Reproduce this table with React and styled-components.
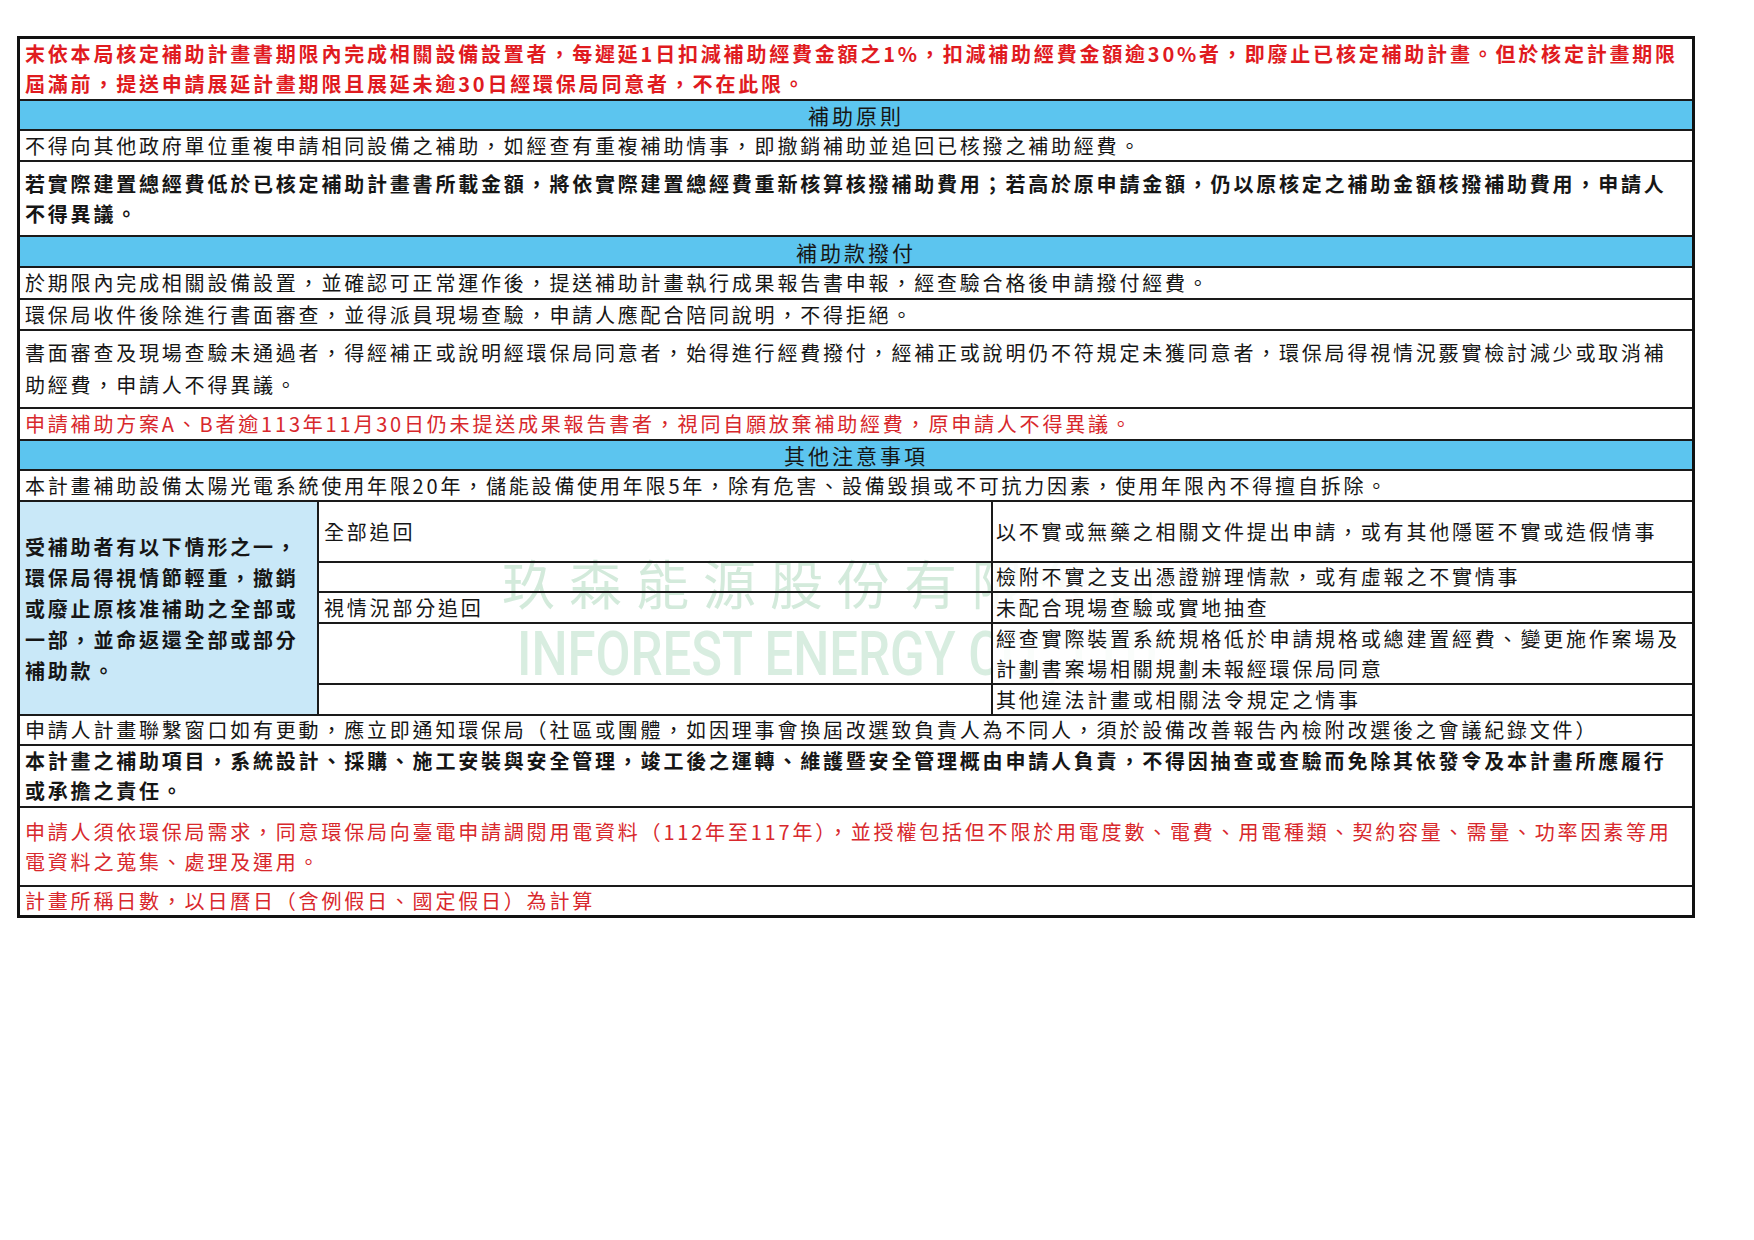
import React from "react";
import styled, { createGlobalStyle } from "styled-components";

const GlobalStyle = createGlobalStyle`
  html, body { margin: 0; padding: 0; background: #ffffff; }
  body { font-family: "Noto Sans CJK TC", "Noto Sans CJK SC", sans-serif; }
`;

const Page = styled.div`
  width: 1754px;
  min-height: 1240px;
  box-sizing: border-box;
  padding: 36px 0 0 17px;
  background: #ffffff;
`;

const Sheet = styled.div`
  width: 1678px;
  box-sizing: border-box;
  border: 3px solid #111;
  display: flex;
  flex-direction: column;
  font-family: "Noto Sans CJK TC", "Noto Sans CJK SC", sans-serif;
  font-size: 20px;
  letter-spacing: 2.8px;
  color: #161616;
`;

const toneColor = (t) =>
  t === "red" ? "#e01b1f" : t === "softred" ? "#d8282c" : "#161616";

const Row = styled.div`
  box-sizing: border-box;
  height: ${(p) => p.$h}px;
  flex: none;
  border-bottom: 2px solid #1a1a1a;
  &:last-child { border-bottom: none; }
  display: flex;
  align-items: center;
  justify-content: flex-start;
  padding-left: 5px;
  background: #ffffff;
  color: ${(p) => toneColor(p.$tone)};
  font-weight: ${(p) => (p.$bold ? 700 : 400)};
`;

const HeadRow = styled.div`
  box-sizing: border-box;
  height: ${(p) => p.$h}px;
  flex: none;
  border-bottom: 2px solid #1a1a1a;
  display: flex;
  align-items: center;
  justify-content: center;
  background: #5cc5ef;
  color: #161616;
  font-size: 21px;
  letter-spacing: 3px;
`;

const Lines = styled.div`
  line-height: ${(p) => p.$lh || 30}px;
  white-space: nowrap;
`;

const Matrix = styled.div`
  position: relative;
  box-sizing: border-box;
  height: 214px;
  flex: none;
  border-bottom: 2px solid #1a1a1a;
  display: grid;
  grid-template-columns: 299px 674px 1fr;
  grid-template-rows: 61px 30px 31px 61px 29px;
  overflow: hidden;
`;

const SideCell = styled.div`
  position: relative;
  z-index: 1;
  grid-column: 1;
  grid-row: 1 / span 5;
  box-sizing: border-box;
  border-right: 2px solid #1a1a1a;
  background: #c9e8f8;
  display: flex;
  align-items: center;
  padding-left: 5px;
  font-weight: 700;
`;

const MidCell = styled.div`
  position: relative;
  z-index: 1;
  grid-column: 2;
  grid-row: ${(p) => p.$row};
  box-sizing: border-box;
  border-right: 2px solid #1a1a1a;
  border-bottom: ${(p) => (p.$last ? "none" : "2px solid #1a1a1a")};
  background: transparent;
  display: flex;
  align-items: center;
  padding-left: 5px;
`;

const RightCell = styled.div`
  position: relative;
  z-index: 1;
  grid-column: 3;
  grid-row: ${(p) => p.$row};
  box-sizing: border-box;
  border-bottom: ${(p) => (p.$last ? "none" : "2px solid #1a1a1a")};
  background: rgba(255, 255, 255, 0.86);
  display: flex;
  align-items: center;
  padding-left: 3px;
`;

const MarkCn = styled.div`
  position: absolute;
  z-index: 0;
  left: 482px;
  top: 54px;
  font-size: 53px;
  line-height: 1;
  letter-spacing: 14px;
  white-space: nowrap;
  color: #d3eadb;
  pointer-events: none;
`;

const MarkEn = styled.div`
  position: absolute;
  z-index: 0;
  left: 497px;
  top: 121px;
  font-family: Roboto, "Liberation Sans", sans-serif;
  font-size: 62px;
  font-weight: 500;
  line-height: 1;
  letter-spacing: 0;
  white-space: nowrap;
  color: #d8ede0;
  transform: scaleX(0.82);
  transform-origin: left top;
  pointer-events: none;
`;

export default function App() {
  return (
    <>
      <GlobalStyle />
      <Page lang="zh-Hant">
        <Sheet>
          <Row $h={62} $tone="red" $bold>
            <Lines>
              末依本局核定補助計畫書期限內完成相關設備設置者，每遲延1日扣減補助經費金額之1%，扣減補助經費金額逾30%者，即廢止已核定補助計畫。但於核定計畫期限
              <br />
              屆滿前，提送申請展延計畫期限且展延未逾30日經環保局同意者，不在此限。
            </Lines>
          </Row>
          <HeadRow $h={30}>補助原則</HeadRow>
          <Row $h={31}>
            <Lines>不得向其他政府單位重複申請相同設備之補助，如經查有重複補助情事，即撤銷補助並追回已核撥之補助經費。</Lines>
          </Row>
          <Row $h={75} $bold>
            <Lines>
              若實際建置總經費低於已核定補助計畫書所載金額，將依實際建置總經費重新核算核撥補助費用；若高於原申請金額，仍以原核定之補助金額核撥補助費用，申請人
              <br />
              不得異議。
            </Lines>
          </Row>
          <HeadRow $h={31}>補助款撥付</HeadRow>
          <Row $h={32}>
            <Lines>於期限內完成相關設備設置，並確認可正常運作後，提送補助計畫執行成果報告書申報，經查驗合格後申請撥付經費。</Lines>
          </Row>
          <Row $h={31}>
            <Lines>環保局收件後除進行書面審查，並得派員現場查驗，申請人應配合陪同說明，不得拒絕。</Lines>
          </Row>
          <Row $h={78}>
            <Lines $lh={32}>
              書面審查及現場查驗未通過者，得經補正或說明經環保局同意者，始得進行經費撥付，經補正或說明仍不符規定未獲同意者，環保局得視情況覈實檢討減少或取消補
              <br />
              助經費，申請人不得異議。
            </Lines>
          </Row>
          <Row $h={32} $tone="softred">
            <Lines>申請補助方案A、B者逾113年11月30日仍未提送成果報告書者，視同自願放棄補助經費，原申請人不得異議。</Lines>
          </Row>
          <HeadRow $h={30}>其他注意事項</HeadRow>
          <Row $h={31}>
            <Lines>本計畫補助設備太陽光電系統使用年限20年，儲能設備使用年限5年，除有危害、設備毀損或不可抗力因素，使用年限內不得擅自拆除。</Lines>
          </Row>
          <Matrix>
            <MarkCn>玖森能源股份有限公司</MarkCn>
            <MarkEn>INFOREST ENERGY CO., LTD.</MarkEn>
            <SideCell>
              <Lines $lh={31}>
                受補助者有以下情形之一，
                <br />
                環保局得視情節輕重，撤銷
                <br />
                或廢止原核准補助之全部或
                <br />
                一部，並命返還全部或部分
                <br />
                補助款。
              </Lines>
            </SideCell>
            <MidCell $row={1}>
              <Lines>全部追回</Lines>
            </MidCell>
            <MidCell $row={2} />
            <MidCell $row={3}>
              <Lines>視情況部分追回</Lines>
            </MidCell>
            <MidCell $row={4} />
            <MidCell $row={5} $last />
            <RightCell $row={1}>
              <Lines>以不實或無藥之相關文件提出申請，或有其他隱匿不實或造假情事</Lines>
            </RightCell>
            <RightCell $row={2}>
              <Lines>檢附不實之支出憑證辦理情款，或有虛報之不實情事</Lines>
            </RightCell>
            <RightCell $row={3}>
              <Lines>未配合現場查驗或實地抽查</Lines>
            </RightCell>
            <RightCell $row={4}>
              <Lines>
                經查實際裝置系統規格低於申請規格或總建置經費、變更施作案場及
                <br />
                計劃書案場相關規劃未報經環保局同意
              </Lines>
            </RightCell>
            <RightCell $row={5} $last>
              <Lines>其他違法計畫或相關法令規定之情事</Lines>
            </RightCell>
          </Matrix>
          <Row $h={30}>
            <Lines>申請人計畫聯繫窗口如有更動，應立即通知環保局（社區或團體，如因理事會換屆改選致負責人為不同人，須於設備改善報告內檢附改選後之會議紀錄文件）</Lines>
          </Row>
          <Row $h={62} $bold>
            <Lines>
              本計畫之補助項目，系統設計、採購、施工安裝與安全管理，竣工後之運轉、維護暨安全管理概由申請人負責，不得因抽查或查驗而免除其依發令及本計畫所應履行
              <br />
              或承擔之責任。
            </Lines>
          </Row>
          <Row $h={79} $tone="softred">
            <Lines>
              申請人須依環保局需求，同意環保局向臺電申請調閱用電資料（112年至117年），並授權包括但不限於用電度數、電費、用電種類、契約容量、需量、功率因素等用
              <br />
              電資料之蒐集、處理及運用。
            </Lines>
          </Row>
          <Row $h={28} $tone="softred">
            <Lines>計畫所稱日數，以日曆日（含例假日、國定假日）為計算</Lines>
          </Row>
        </Sheet>
      </Page>
    </>
  );
}
